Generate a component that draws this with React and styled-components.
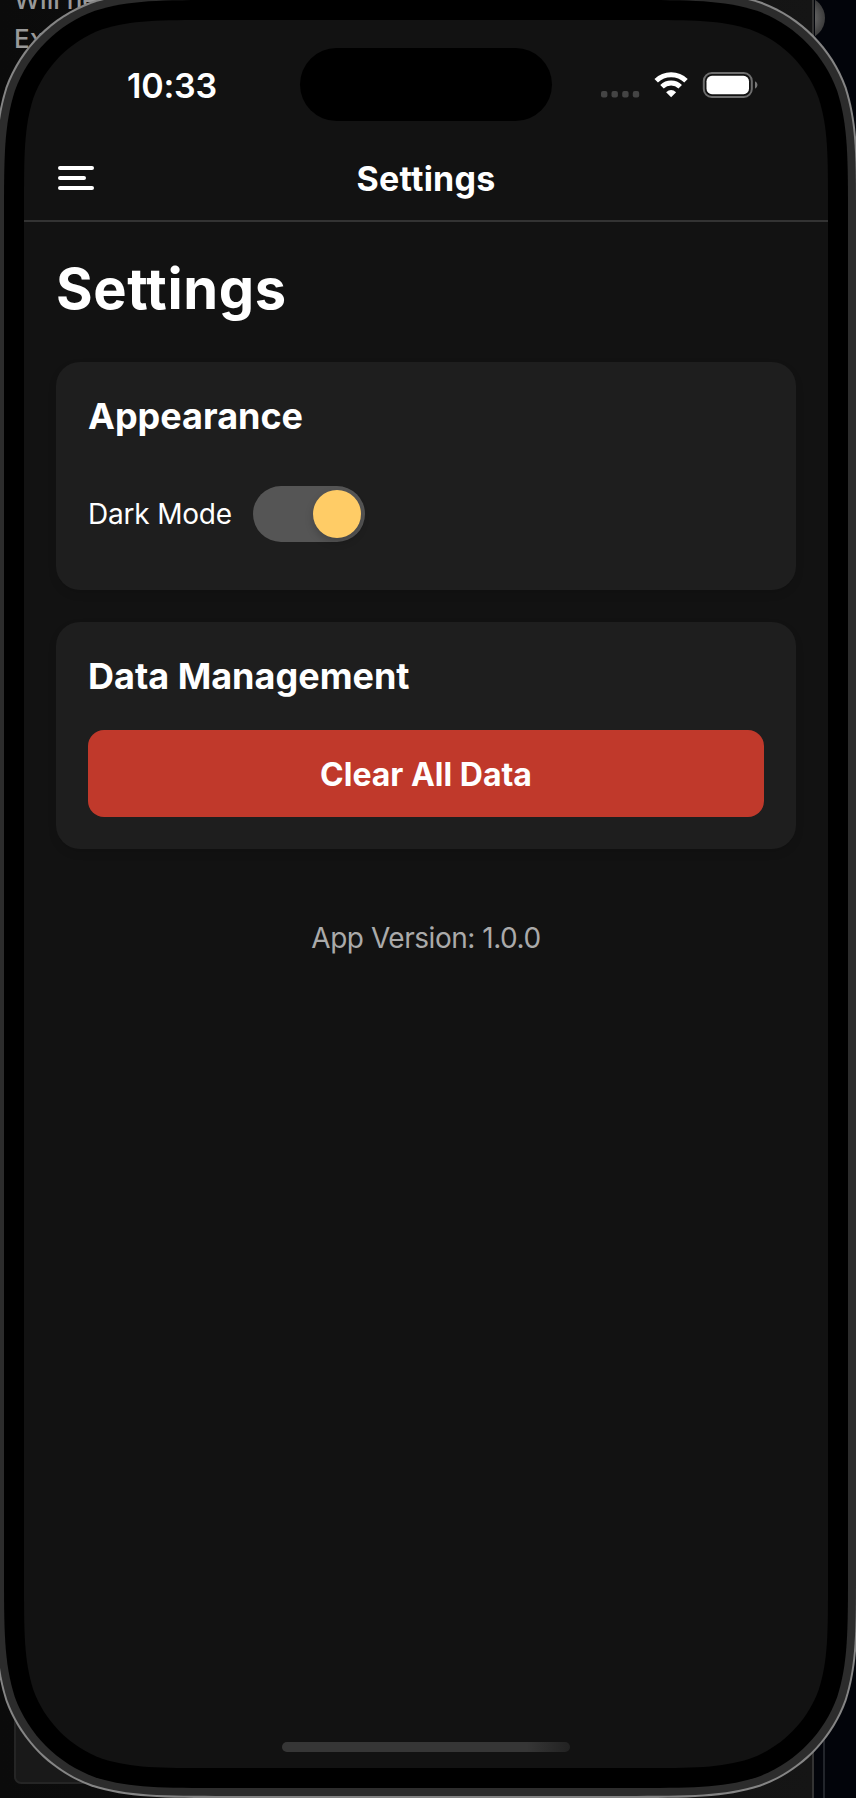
import React from "react";
import styled, { createGlobalStyle } from "styled-components";

const GlobalStyle = createGlobalStyle`
  * { box-sizing: border-box; }
  body { margin: 0; background: #0b0b0b; font-family: Inter, "Liberation Sans", sans-serif; }
  h1, h2, p { margin: 0; }
  button { border: 0; font-family: inherit; }
`;

// Closed outline of a rectangle with continuous (iOS style) corners.
const continuous = (w, h, r) => {
  const k = [1.52866, 1.08849, 0.86841, 0.63149, 0.37282, 0.16906, 0.07491].map((n) => n * r);
  const [a, b, c, d, e, f, g] = k;
  return [
    `M${a} 0 L${w - a} 0`,
    `C${w - b} 0 ${w - c} 0 ${w - d} ${g}`,
    `C${w - e} ${f} ${w - f} ${e} ${w - g} ${d}`,
    `C${w} ${c} ${w} ${b} ${w} ${a} L${w} ${h - a}`,
    `C${w} ${h - b} ${w} ${h - c} ${w - g} ${h - d}`,
    `C${w - f} ${h - e} ${w - e} ${h - f} ${w - d} ${h - g}`,
    `C${w - c} ${h} ${w - b} ${h} ${w - a} ${h} L${a} ${h}`,
    `C${b} ${h} ${c} ${h} ${d} ${h - g}`,
    `C${e} ${h - f} ${f} ${h - e} ${g} ${h - d}`,
    `C0 ${h - c} 0 ${h - b} 0 ${h - a} L0 ${a}`,
    `C0 ${b} 0 ${c} ${g} ${d}`,
    `C${f} ${e} ${e} ${f} ${d} ${g}`,
    `C${c} 0 ${b} 0 ${a} 0Z`,
  ].join(" ");
};

const Desktop = styled.div`
  position: relative;
  width: 856px;
  height: 1798px;
  overflow: hidden;
  background: linear-gradient(90deg, #0b0b0b, #151515 812px, #333 812px, #333 814px, #02040a 814px);
`;

const BackText = styled.p`
  position: absolute;
  left: 14px;
  top: -20px;
  font-size: 26px;
  font-weight: 500;
  line-height: 39px;
  color: #999;
`;

const BackCard = styled.div`
  position: absolute;
  left: 14px;
  bottom: 14px;
  width: 300px;
  height: 160px;
  border: 2px solid #252525;
  border-radius: 7px;
  background: #191919;
`;

const BackAvatar = styled.div`
  position: absolute;
  left: 785px;
  top: -3px;
  width: 40px;
  height: 42px;
  border-radius: 50%;
  background: radial-gradient(circle, #777 10%, #444 60%, #222);
  clip-path: inset(0 0 0 30px);
`;

const BackRule = styled.div`
  position: absolute;
  left: 823px;
  bottom: 0;
  width: 2px;
  height: 120px;
  background: #22252b;
`;

const Layer = styled.div`
  width: ${(p) => p.$w}px;
  height: ${(p) => p.$h}px;
  padding: ${(p) => p.$pad}px;
  background: ${(p) => p.$fill};
  clip-path: path("${(p) => continuous(p.$w, p.$h, p.$r)}");
`;

const Phone = styled.div`
  position: relative;
  width: 864px;
  margin: -10px 0 0 -6px;
`;

const Screen = styled(Layer)`
  display: flex;
  flex-direction: column;
  color: #fff;
`;

const StatusBar = styled.div`
  display: flex;
  align-items: center;
  height: 116px;
  padding: 13px 68px 0 103px;
`;

const Time = styled.div`
  width: 173px;
  padding-top: 2px;
  font-size: 34px;
  font-weight: 600;
  line-height: 40px;
  letter-spacing: -0.2px;
`;

const Island = styled.div`
  width: 252px;
  height: 73px;
  border-radius: 37px;
  background: #000;
`;

const StatusIcons = styled.div`
  margin-left: auto;
  display: flex;
  align-items: center;
  height: 28px;
  padding-top: 1px;
`;

const NavBar = styled.header`
  display: grid;
  grid-template-columns: 70px 1fr 70px;
  align-items: center;
  height: 86px;
  border-bottom: 2px solid #333;
`;

const MenuButton = styled.button`
  display: flex;
  flex-direction: column;
  gap: 6px;
  padding: 0 0 0 34px;
  background: none;
`;

const MenuLine = styled.span`
  width: ${(p) => (p.$short ? 28 : 36)}px;
  height: 4px;
  border-radius: 2px;
  background: #fff;
`;

const NavTitle = styled.div`
  padding-top: 2px;
  text-align: center;
  font-size: 34px;
  font-weight: 700;
  line-height: 40px;
  letter-spacing: 0.25px;
`;

const Content = styled.main`
  flex: 1;
  padding: 33px 32px 32px;
`;

const Title = styled.h1`
  margin-bottom: 39px;
  font-size: 56px;
  font-weight: 700;
  line-height: 68px;
  letter-spacing: 0.6px;
`;

const Card = styled.section`
  margin-bottom: 32px;
  padding: 32px;
  border-radius: 24px;
  background: #1e1e1e;
  box-shadow: 0 4px 8px rgba(0, 0, 0, 0.1);
`;

const CardTitle = styled.h2`
  margin-bottom: 32px;
  font-size: 36px;
  font-weight: 700;
  line-height: 44px;
`;

const SettingRow = styled.div`
  display: flex;
  align-items: center;
  gap: 21px;
  padding: 16px 0;
`;

const SettingLabel = styled.span`
  width: 144px;
  white-space: nowrap;
  font-size: 28px;
  font-weight: 400;
  line-height: 34px;
  letter-spacing: -0.2px;
`;

const Toggle = styled.button`
  display: flex;
  justify-content: flex-end;
  width: 112px;
  height: 56px;
  padding: 4px;
  border-radius: 28px;
  background: #555;
`;

const Knob = styled.span`
  width: 48px;
  height: 48px;
  border-radius: 50%;
  background: #ffcc66;
  box-shadow: 0 4px 8px rgba(0, 0, 0, 0.2);
`;

const DangerButton = styled.button`
  display: block;
  width: 100%;
  height: 87px;
  padding: 1px 0 0;
  border-radius: 16px;
  background: #c0392b;
  color: #fff;
  font-size: 32px;
  font-weight: 700;
`;

const Version = styled.p`
  margin-top: 72px;
  text-align: center;
  font-size: 28px;
  font-weight: 400;
  line-height: 34px;
  letter-spacing: -0.47px;
  color: #aaa;
`;

const HomeIndicator = styled.div`
  align-self: center;
  width: 288px;
  height: 10px;
  margin-bottom: 16px;
  border-radius: 5px;
  background: linear-gradient(90deg, #363636 85%, #222);
`;

const StatusGlyphs = () => (
  <svg width="160" height="28" viewBox="600 71 160 28">
    {[601, 611.5, 622.2, 632.8].map((x) => (
      <rect key={x} x={x} y="91" width="6.4" height="6.4" rx="2" fill="#444" />
    ))}
    <g fill="none" stroke="#fff" strokeWidth="5">
      <path d="M656.2 80.8a21.4 21.4 0 0 1 29.8 0" />
      <path d="M662 86.8a13 13 0 0 1 18.2 0" />
    </g>
    <path d="M671.1 97.2l-5-4.9q5-4.6 10 0z" fill="#fff" />
    <rect x="703.8" y="73" width="48" height="24" rx="8" fill="none" stroke="#6e6e6e" strokeWidth="2" />
    <rect x="706.5" y="75.8" width="42.5" height="18.4" rx="5.5" fill="#fff" />
    <path d="M755 81.3q2.5 1.2 2.5 3.7t-2.5 3.7z" fill="#777" />
  </svg>
);

export default function App() {
  return (
    <Desktop>
      <GlobalStyle />
      <BackText>Will ne<br />Ex</BackText>
      <BackCard />
      <BackAvatar />
      <BackRule />
      <Phone>
        <Layer $w={864} $h={1808} $r={154} $pad={2} $fill="#858585">
          <Layer $w={860} $h={1804} $r={152} $pad={8} $fill="#2c2c2c">
            <Layer $w={844} $h={1788} $r={144} $pad={20} $fill="#000">
              <Screen $w={804} $h={1748} $r={124} $pad={0} $fill="#121212">
                <StatusBar>
                  <Time>10:33</Time>
                  <Island />
                  <StatusIcons><StatusGlyphs /></StatusIcons>
                </StatusBar>
                <NavBar>
                  <MenuButton aria-label="Menu">
                    <MenuLine />
                    <MenuLine $short />
                    <MenuLine />
                  </MenuButton>
                  <NavTitle>Settings</NavTitle>
                </NavBar>
                <Content>
                  <Title>Settings</Title>
                  <Card>
                    <CardTitle>Appearance</CardTitle>
                    <SettingRow>
                      <SettingLabel>Dark Mode</SettingLabel>
                      <Toggle role="switch" aria-checked="true" aria-label="Dark Mode"><Knob /></Toggle>
                    </SettingRow>
                  </Card>
                  <Card>
                    <CardTitle>Data Management</CardTitle>
                    <DangerButton>Clear All Data</DangerButton>
                  </Card>
                  <Version>App Version: 1.0.0</Version>
                </Content>
                <HomeIndicator />
              </Screen>
            </Layer>
          </Layer>
        </Layer>
      </Phone>
    </Desktop>
  );
}
